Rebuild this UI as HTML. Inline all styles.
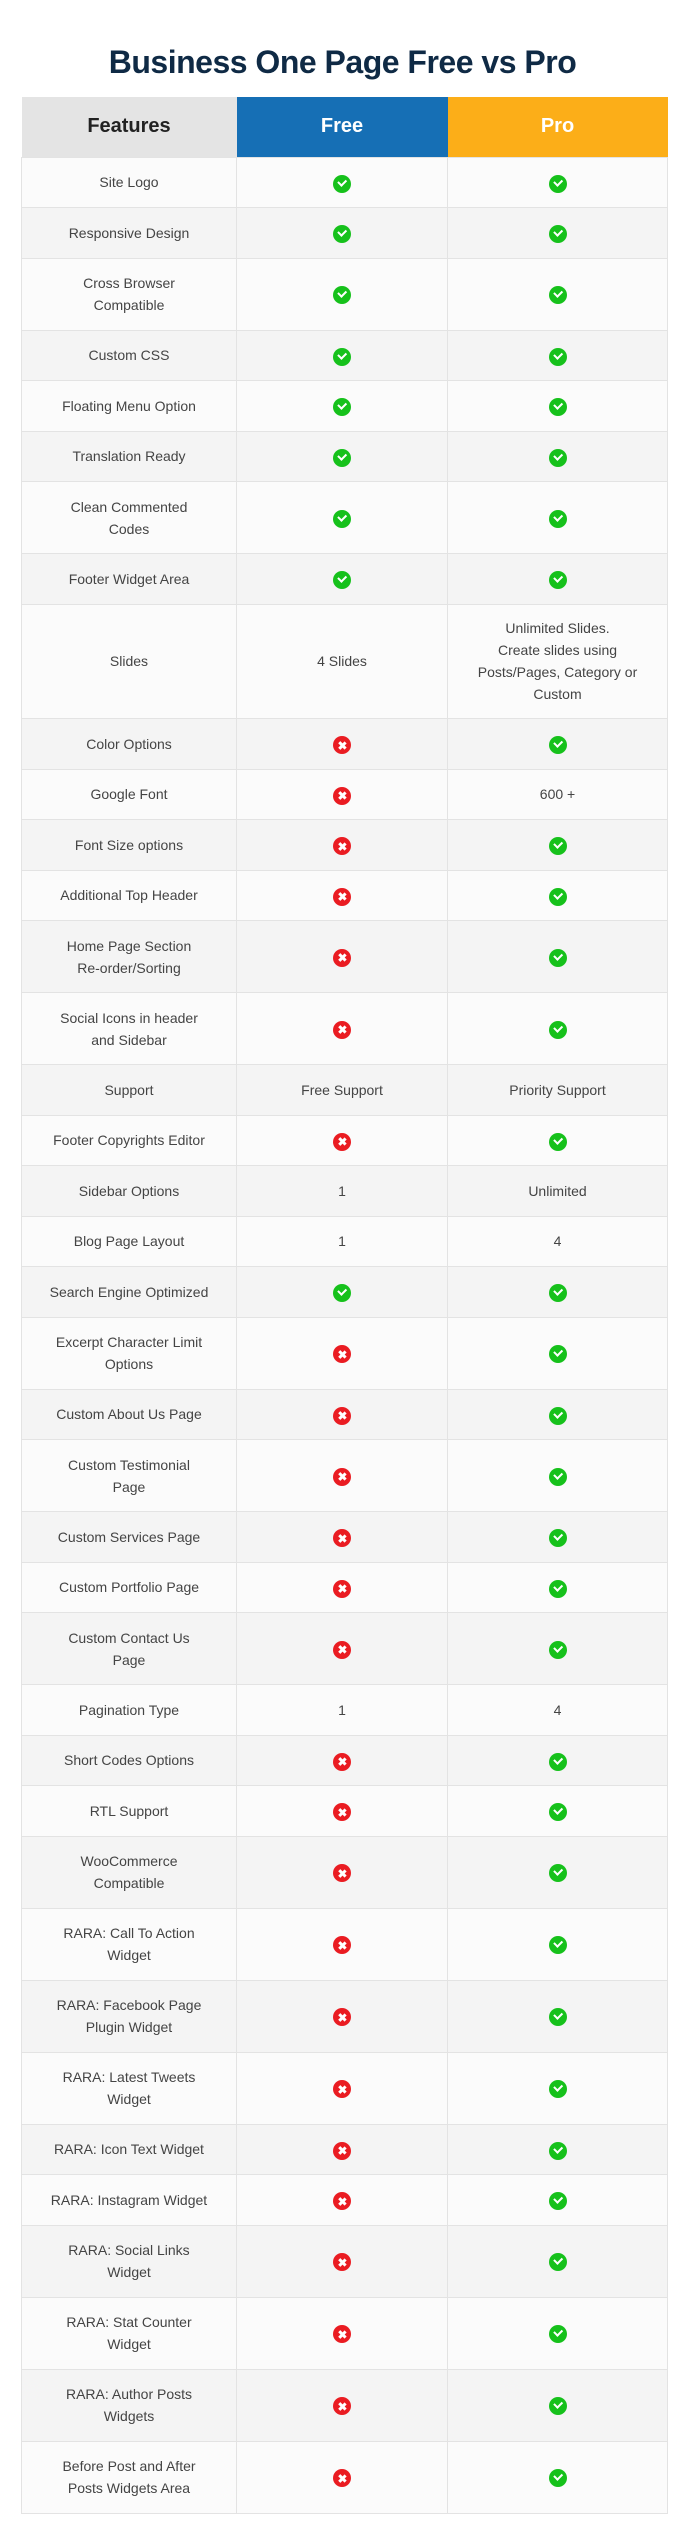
<!DOCTYPE html>
<html><head><meta charset="utf-8"><style>
*{margin:0;padding:0;box-sizing:border-box}
body{width:685px;height:2546px;background:#fff;font-family:"Liberation Sans",sans-serif;position:relative}
h1{position:absolute;top:44px;left:0;width:685px;text-align:center;font-size:32px;font-weight:bold;color:#0f2a45;letter-spacing:-0.5px}
table{position:absolute;top:97px;left:21px;width:647px;border-collapse:collapse;table-layout:fixed}
th{height:60px;font-size:20px;font-weight:bold}
th.f{background:#e4e4e4;color:#222;width:215px}
th.fr{background:#166fb5;color:#fff;width:211px}
th.p{background:#fcae18;color:#fff}
td{border:1px solid #e3e3e3;text-align:center;vertical-align:middle;font-size:14px;color:#444;line-height:22px;padding:0 4px;white-space:nowrap}
tr.s td{height:50.5px}
tr.d td{height:72px}
tr.t td{height:114.5px}
tbody tr:nth-child(odd) td{background:#fbfbfb}
tbody tr:nth-child(even) td{background:#f4f4f4}
.y,.n{display:inline-block;width:18px;height:18px;border-radius:50%;vertical-align:middle;position:relative}
.y{background:#16c11b}
.n{background:#ea1c22}
.y:after{content:"";position:absolute;left:5px;top:4px;width:6px;height:3.5px;border-left:2.5px solid #fff;border-bottom:2.5px solid #fff;transform:rotate(-45deg)}
.n:before,.n:after{content:"";position:absolute;left:8px;top:4.5px;width:2.5px;height:9px;background:#fff;transform:rotate(45deg)}
.n:after{transform:rotate(-45deg)}
</style></head><body>
<h1>Business One Page Free vs Pro</h1>
<table>
<thead><tr><th class="f">Features</th><th class="fr">Free</th><th class="p">Pro</th></tr></thead>
<tbody>
<tr class="s"><td>Site Logo</td><td><i class="y"></i></td><td><i class="y"></i></td></tr>
<tr class="s"><td>Responsive Design</td><td><i class="y"></i></td><td><i class="y"></i></td></tr>
<tr class="d"><td>Cross Browser<br>Compatible</td><td><i class="y"></i></td><td><i class="y"></i></td></tr>
<tr class="s"><td>Custom CSS</td><td><i class="y"></i></td><td><i class="y"></i></td></tr>
<tr class="s"><td>Floating Menu Option</td><td><i class="y"></i></td><td><i class="y"></i></td></tr>
<tr class="s"><td>Translation Ready</td><td><i class="y"></i></td><td><i class="y"></i></td></tr>
<tr class="d"><td>Clean Commented<br>Codes</td><td><i class="y"></i></td><td><i class="y"></i></td></tr>
<tr class="s"><td>Footer Widget Area</td><td><i class="y"></i></td><td><i class="y"></i></td></tr>
<tr class="t"><td>Slides</td><td>4 Slides</td><td>Unlimited Slides.<br>Create slides using<br>Posts/Pages, Category or<br>Custom</td></tr>
<tr class="s"><td>Color Options</td><td><i class="n"></i></td><td><i class="y"></i></td></tr>
<tr class="s"><td>Google Font</td><td><i class="n"></i></td><td>600 +</td></tr>
<tr class="s"><td>Font Size options</td><td><i class="n"></i></td><td><i class="y"></i></td></tr>
<tr class="s"><td>Additional Top Header</td><td><i class="n"></i></td><td><i class="y"></i></td></tr>
<tr class="d"><td>Home Page Section<br>Re-order/Sorting</td><td><i class="n"></i></td><td><i class="y"></i></td></tr>
<tr class="d"><td>Social Icons in header<br>and Sidebar</td><td><i class="n"></i></td><td><i class="y"></i></td></tr>
<tr class="s"><td>Support</td><td>Free Support</td><td>Priority Support</td></tr>
<tr class="s"><td>Footer Copyrights Editor</td><td><i class="n"></i></td><td><i class="y"></i></td></tr>
<tr class="s"><td>Sidebar Options</td><td>1</td><td>Unlimited</td></tr>
<tr class="s"><td>Blog Page Layout</td><td>1</td><td>4</td></tr>
<tr class="s"><td>Search Engine Optimized</td><td><i class="y"></i></td><td><i class="y"></i></td></tr>
<tr class="d"><td>Excerpt Character Limit<br>Options</td><td><i class="n"></i></td><td><i class="y"></i></td></tr>
<tr class="s"><td>Custom About Us Page</td><td><i class="n"></i></td><td><i class="y"></i></td></tr>
<tr class="d"><td>Custom Testimonial<br>Page</td><td><i class="n"></i></td><td><i class="y"></i></td></tr>
<tr class="s"><td>Custom Services Page</td><td><i class="n"></i></td><td><i class="y"></i></td></tr>
<tr class="s"><td>Custom Portfolio Page</td><td><i class="n"></i></td><td><i class="y"></i></td></tr>
<tr class="d"><td>Custom Contact Us<br>Page</td><td><i class="n"></i></td><td><i class="y"></i></td></tr>
<tr class="s"><td>Pagination Type</td><td>1</td><td>4</td></tr>
<tr class="s"><td>Short Codes Options</td><td><i class="n"></i></td><td><i class="y"></i></td></tr>
<tr class="s"><td>RTL Support</td><td><i class="n"></i></td><td><i class="y"></i></td></tr>
<tr class="d"><td>WooCommerce<br>Compatible</td><td><i class="n"></i></td><td><i class="y"></i></td></tr>
<tr class="d"><td>RARA: Call To Action<br>Widget</td><td><i class="n"></i></td><td><i class="y"></i></td></tr>
<tr class="d"><td>RARA: Facebook Page<br>Plugin Widget</td><td><i class="n"></i></td><td><i class="y"></i></td></tr>
<tr class="d"><td>RARA: Latest Tweets<br>Widget</td><td><i class="n"></i></td><td><i class="y"></i></td></tr>
<tr class="s"><td>RARA: Icon Text Widget</td><td><i class="n"></i></td><td><i class="y"></i></td></tr>
<tr class="s"><td>RARA: Instagram Widget</td><td><i class="n"></i></td><td><i class="y"></i></td></tr>
<tr class="d"><td>RARA: Social Links<br>Widget</td><td><i class="n"></i></td><td><i class="y"></i></td></tr>
<tr class="d"><td>RARA: Stat Counter<br>Widget</td><td><i class="n"></i></td><td><i class="y"></i></td></tr>
<tr class="d"><td>RARA: Author Posts<br>Widgets</td><td><i class="n"></i></td><td><i class="y"></i></td></tr>
<tr class="d"><td>Before Post and After<br>Posts Widgets Area</td><td><i class="n"></i></td><td><i class="y"></i></td></tr>
</tbody></table>
</body></html>
